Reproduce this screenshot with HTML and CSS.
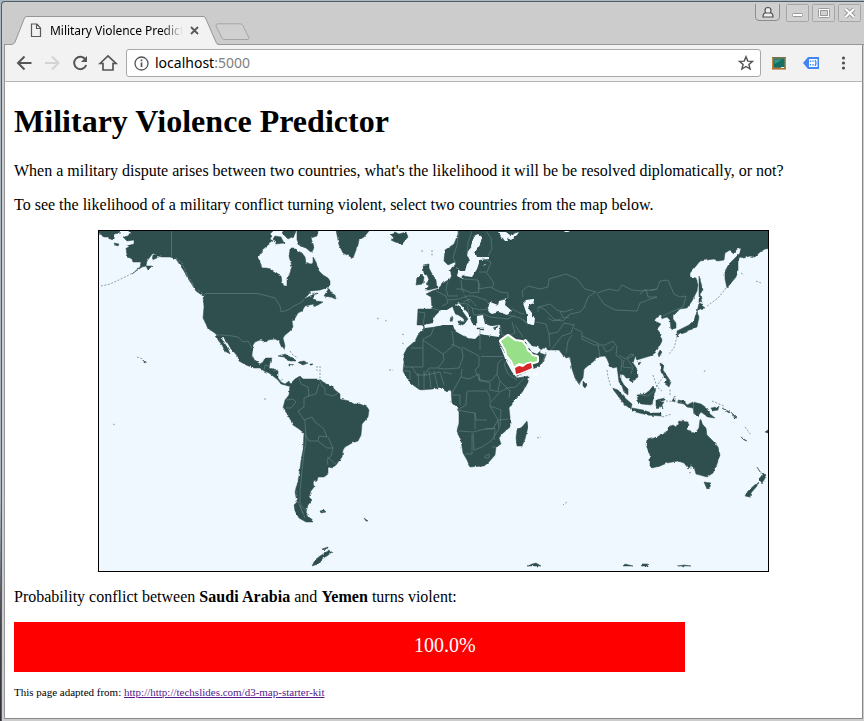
FILE: index.html
```html
<!DOCTYPE html>
<html lang="en">
<head>
<meta charset="utf-8">
<title>Military Violence Predictor</title>
<link rel="stylesheet" href="styles.css">
</head>
<body>
<div class="window">
  <header class="titlebar">
    <div class="tab">
      <svg class="tab-shape" width="208" height="30" viewBox="0 0 208 30"><path d="M0 28.500H1L4 27 13.500 2Q14 .5 16 .5H192Q194 .5 194.500 2L205 27 208 30H0Z" fill="#f2f2f2"/><path d="M0 28.500Q3 28.500 4 26L13.500 2Q14 .5 16 .5H192Q194 .5 194.500 2L205 26Q206 28.500 208 28.500" fill="none" stroke="#979797"/></svg>
      <svg class="page-icon" width="12" height="15" viewBox="0 0 12 15"><path d="M1.500 1H7L10.500 5V13.500H1.500ZM6.500 1V5.500H10.500" fill="none" stroke="#5a5a5a" stroke-width="1.200"/></svg>
      <span class="tab-title">Military Violence Predict</span>
      <svg class="tab-close" width="9" height="9" viewBox="0 0 9 9"><path d="M1 1 8 8M8 1 1 8" stroke="#5a5a5a" stroke-width="1.800"/></svg>
    </div>
    <svg class="new-tab" width="36" height="18" viewBox="0 0 36 18"><path d="M3 .8H25Q27 .8 28 2.500L34 15Q34 16.500 32 16.500H10Q8 16.500 7 15L1 3Q.5 .8 3 .8Z" fill="#d0d0d0" stroke="#a5a5a5"/></svg>
    <svg class="window-buttons" width="109" height="20" viewBox="0 0 109 20">
      <path d="M.5 0V13Q.5 16.500 4 16.500H21Q24.500 16.500 24.500 13V0" fill="#d0d0d0" stroke="#8d8d8d"/>
      <path d="M10 6.500Q10 3.500 13 3.500T16 6.500Q16 8 15 9H16Q18 9.500 18 13H8Q8 9.500 10 9H11Q10 8 10 6.500ZM10.500 9H15.500" fill="#eee" stroke="#505050" stroke-width="1.200"/>
      <g fill="#d0d0d0" stroke="#a6a6a6"><rect x="31.500" y=".5" width="22" height="17" rx="1"/><rect x="57.500" y=".5" width="22" height="17" rx="1"/><rect x="83.500" y=".5" width="22" height="17" rx="1"/></g>
      <rect x="37.500" y="9.500" width="10" height="3" rx="1" fill="#fff" stroke="#999"/>
      <rect x="63.500" y="4.500" width="11" height="9" rx="1" fill="#fff" stroke="#999"/><rect x="65.500" y="6.500" width="7" height="5" fill="#d0d0d0" stroke="#999"/>
      <path d="M90.500 5 99 13M99 5 90.500 13" stroke="#999" stroke-width="4"/><path d="M90.500 5 99 13M99 5 90.500 13" stroke="#fff" stroke-width="2"/>
    </svg>
  </header>
  <nav class="toolbar">
    <svg class="nav-icons" width="112" height="30" viewBox="0 0 112 30" fill="none" stroke-width="2">
      <path d="M17 15H3.500M10 8.500 3.500 15 10 21.500" transform="translate(.5 0)" stroke="#555"/>
      <path d="M31 15H44.500M38 8.500 44.500 15 38 21.500" stroke="#d3d3d3"/>
      <path d="M71.500 11.500A6.200 6.200 0 1 0 72.200 17" stroke="#555"/><path d="M73 8V14H67Z" fill="#555"/>
      <path d="M86 15.500 94 8 102 15.500H99V22H89V15.500Z" stroke="#555" stroke-width="1.700"/>
    </svg>
    <div class="omnibox">
      <svg width="15" height="15" viewBox="0 0 15 15"><circle cx="7.500" cy="7.500" r="6.500" fill="none" stroke="#555" stroke-width="1.300"/><path d="M7.500 6.500V11M7.500 3.500V5.300" stroke="#555" stroke-width="1.700"/></svg>
      <span class="url">localhost<span class="port">:5000</span></span>
      <svg class="star" width="16" height="16" viewBox="0 0 16 16"><path d="M8 1.700 9.800 6.100 14.500 6.400 10.900 9.400 12.100 14 8 11.500 3.900 14 5.100 9.400 1.500 6.400 6.200 6.100Z" fill="none" stroke="#505050" stroke-width="1.400"/></svg>
    </div>
    <svg class="extensions" width="82" height="20" viewBox="0 0 82 20">
      <rect x=".7" y="4.700" width="12.600" height="10.600" fill="#176f63" stroke="#c08a45" stroke-width="1.400"/><path d="M0 4.500H14" stroke="#777351"/><path d="M2 6.500H10L3 11Z" fill="#369888"/><path d="M0 16H14" stroke="#a3561d"/><path d="M9 14.500H12" stroke="#eee"/>
      <path d="M31 10 36 4H47V16H36Z" fill="#4285f4"/><path d="M37 6H45.500V14H37Z" fill="#fff"/><path d="M38.500 7.500V9M38.500 11V12.500M41 7.500V9M41 11V12.500M43 7Q45 10 43 13M34 8.500V11.500" fill="none" stroke="#4285f4" stroke-width="1.300"/>
      <g fill="#505050"><circle cx="71.500" cy="5" r="1.600"/><circle cx="71.500" cy="10" r="1.600"/><circle cx="71.500" cy="15" r="1.600"/></g>
    </svg>
  </nav>
  <main class="page">
    <h1>Military Violence Predictor</h1>
    <p>When a military dispute arises between two countries, what's the likelihood it will be be resolved diplomatically, or not?</p>
    <p>To see the likelihood of a military conflict turning violent, select two countries from the map below.</p>
    <svg class="map" viewBox="99 231 669 340">
      <!-- Gives the simplified outlines an irregular coastline -->
      <filter id="coast" filterUnits="userSpaceOnUse" x="90" y="220" width="690" height="360" color-interpolation-filters="sRGB">
        <feTurbulence type="fractalNoise" baseFrequency=".22" numOctaves="2" seed="4" result="noise"/>
        <feDisplacementMap in="SourceGraphic" in2="noise" scale="2.6" xChannelSelector="R" yChannelSelector="G"/>
      </filter>
      <g filter="url(#coast)">
      <g class="land">
        <!-- North and Central America -->
        <path d="M125 225H273V231L270 234 272 236 270 239 273 241 268 245 262 250 260 254 258 258 260 262 262 268 267 268 272 270 277 273 281 276 282 282 284 286 287 286 287 278 290 273 292 266 290 260 289 256 290 249 296 249 298 251 302 253 305 257 306 262 310 264 313 263 313 257 316 262 317 265 319 271 323 275 328 278 330 281 330 285 326 288 320 290 312 291 308 295 304 299 312 295 317 293 315 297 316 301 323 302 318 305 313 307 314 304 305 306 302 311 298 313 294 320 292 321 293 327 290 331 285 335 283 338 285 346 284 350 281 346 279 341 275 339 268 340 267 342 260 340 255 342 253 345 252 355 255 361 260 364 263 362 265 358 272 358 270 363 269 368 278 370 278 378 281 382 285 384 289 381 291 386 288 386 285 385 281 384 278 380 273 376 269 373 264 371 260 368 254 368 246 365 239 361 238 357 234 352 231 349 227 342 223 337 220 337 224 342 228 349 230 354 225 351 222 345 218 340 216 334 212 331 208 329 206 324 203 318 204 307 203 296 196 291 191 283 187 277 184 271 180 265 176 259 170 257 162 257 157 256 153 253 150 257 147 261 146 266 142 267 136 271 132 274 140 267 141 262 133 262 132 259 128 257 127 255 126 248 130 245 134 244 134 240 127 241 123 237 128 236 130 233Z"/>
        <path d="M90 225H118V231L121 233 115 234 114 238 112 240 108 237 104 237 99 234ZM297 225H318V231L317 236 311 238 314 247 312 253 306 248 300 246 297 240ZM275 236 281 237 284 243 276 244 273 239ZM281 225H296V231L294 236 288 239 284 235ZM335 225H369V231L364 237 359 240 358 245 356 250 353 258 349 256 343 253 339 245ZM324 296 329 288 331 293 335 295 336 299 330 297ZM278 356 285 354 297 361 290 361 283 357ZM298 362 304 361 308 363 303 365 299 363ZM289 364 293 365 289 366ZM310 364 313 364 312 365 310 365ZM114 243 119 244 118 246 115 245ZM146 266 152 266 148 270ZM153 255 158 254 157 258 152 260ZM144 360 146 362 144 363Z"/>
        <!-- South America -->
        <path d="M290 384 295 379 300 376 303 379 318 379 325 383 332 386 335 390 340 394 340 399 349 401 354 404 360 404 367 407 369 410 368 417 362 424 361 435 358 441 352 443 345 447 343 450 342 457 336 465 332 468 328 466 328 474 324 477 318 477 317 481 313 482 314 487 311 491 309 497 312 500 308 505 306 512 309 517 313 522 306 522 299 518 295 511 294 505 297 502 295 492 299 476 301 461 303 450 304 433 299 429 293 425 288 415 283 408 285 400 289 395Z"/>
        <path d="M320 511 324 510 326 512 321 513ZM364 518 368 521 366 521ZM312 566 315 560 320 556 328 551 332 552 327 556 323 558 318 564ZM322 549 328 547 328 548 323 550Z"/>
        <!-- Europe, Africa and Asia -->
        <path d="M458 225H775V248L765 249 760 252 755 257 750 256 744 258 740 257 738 260 738 270 736 277 731 283 727 288 725 279 725 271 729 264 733 260 740 253 741 248 737 249 734 253 730 250 725 253 724 260 718 261 714 259 700 261 696 266 690 273 690 277 696 278 698 285 697 291 692 301 687 308 680 309 673 316 673 319 676 323 676 328 671 330 670 320 667 317 661 319 662 315 656 318 654 321 657 322 661 324 657 329 661 334 662 341 659 347 655 353 650 356 640 359 637 360 635 357 633 363 637 369 638 377 635 379 631 382 630 378 626 378 624 375 621 374 621 380 624 385 628 389 628 395 624 392 622 386 619 382 618 374 617 367 613 368 610 366 607 359 605 356 597 357 594 361 584 369 583 378 579 384 575 378 572 369 570 357 565 358 559 350 548 350 545 348 540 350 540 353 546 355 543 362 538 367 532 369 517 376 517 378 529 376 528 382 525 388 520 395 513 402 509 408 510 417 510 427 502 434 499 438 501 444 496 447 495 455 488 463 484 466 470 467 467 460 463 453 461 441 457 431 459 423 459 412 457 408 452 403 451 390 445 391 442 387 433 389 420 390 413 385 408 380 403 371 404 362 403 356 407 348 415 341 418 335 425 328 422 325 417 325 418 309 432 309 431 297 426 294 432 291 438 289 443 283 450 279 452 275 450 270 456 265 455 262 448 265 444 261 445 250 454 244 458 234Z"/>
        <path d="M423 265 429 264 429 268 431 272 436 280 437 288 429 290 425 290 429 286 426 284 429 280 427 275 424 274ZM417 278 421 274 424 277 423 284 416 285ZM390 234 395 232 399 234 406 232 408 237 402 244 395 242 391 240 394 238ZM527 421 528 427 525 439 522 446 517 446 516 438 517 430 522 427ZM583 381 587 385 585 388 583 386ZM699 276 703 290 700 294 702 303 699 302ZM699 303 705 308 700 309 697 312ZM697 312 699 317 697 327 690 330 686 332 680 334 677 337 677 331 683 328 689 325 694 320ZM660 350 662 352 659 357 658 354ZM660 363 664 365 663 370 667 376 671 382 669 387 664 383 667 380 661 372ZM637 363 641 362 639 365ZM765 240 768 237V242Z"/>
        <!-- South-east Asia and Oceania -->
        <path d="M612 388 618 390 625 398 632 404 631 409 625 405ZM632 408 643 410 652 413 661 413 661 416 647 415 632 411ZM637 395 645 394 650 390 653 386 656 389 654 395 652 405 641 404 638 401ZM656 400 665 398 665 400 659 402 664 402 662 405 663 409 660 406 658 409 656 406ZM672 401 675 396 675 402ZM678 400 684 401 687 405 693 402 701 404 708 409 710 414 715 418 708 417 701 412 698 416 694 413 693 408 687 407 684 404 679 403ZM711 408 717 407 719 405 718 410 712 411ZM722 408 730 412 729 413ZM731 412 737 418 735 418ZM741 437 747 441 744 440ZM647 440 654 438 661 435 667 431 669 427 673 425 676 427 679 421 688 422 689 425 687 429 694 433 697 433 699 428 700 419 703 425 706 428 707 435 713 441 718 447 720 455 717 464 713 473 707 477 696 474 694 467 691 466 688 468 684 463 678 461 667 463 660 466 652 468 650 466 650 455 646 445ZM704 482 711 483 710 487 707 489ZM757 467 761 473 767 475 762 483 759 479 762 475ZM758 482 757 486 751 493 750 497 745 496 748 491ZM528 566 532 564 536 563 541 566ZM623 566 625 564 633 566ZM641 566 643 564 647 564 649 566ZM678 566 684 565 691 566ZM765 432 768 430V433Z"/>
      </g>
      <!-- Inland seas -->
      <path class="sea" d="M478 234 482 237 480 245 475 252 477 257 489 257 489 259 480 260 477 269 472 277 465 276 463 279 457 276 458 271 456 267 460 271 465 271 467 264 470 261 467 254 471 246 474 236ZM498 232 505 241 508 241 507 238 511 240 517 235 519 232 510 235 506 232ZM425 328 424 325 433 323 435 316 440 311 445 311 452 307 459 303 468 313 472 323 476 326 477 316 483 315 485 324 491 326 500 325 499 337 492 336 480 334 475 339 468 338 462 335 455 331 453 325 443 325 433 327ZM487 311 490 302 498 305 499 301 506 299 505 305 512 311 507 315 499 312 492 314ZM523 303 526 300 533 299 534 303 529 305 528 308 532 313 532 317 535 318 534 325 527 324 527 315ZM523 340 526 339 532 346 538 347 541 350 537 354 532 352 527 345ZM499 343 505 353 516 372 517 378 512 372 506 361ZM564 231H570L568 232H565ZM482 266 485 265 484 264ZM308 293 317 291 313 294 319 295 321 300 313 299 315 294Z"/>
      <path class="land" d="M452 305 458 305 463 312 468 319 465 323 463 318 455 313ZM458 321 465 322 463 325 458 323ZM451 316 453 317 452 322 450 321ZM477 328 484 328 484 329 477 329ZM493 328 498 326 496 329ZM452 267 458 269 456 276 451 275ZM470 313 476 315 477 323 473 321ZM462 276 465 275 465 278 462 278Z"/>
      </g>
      <!-- Country borders -->
      <path class="borders" d="M171.500 231V257M205 293.500H257L264 295 275 298 280 306 281 312 288 310 294 306 302 302 304 299M216 335H222L232 336 238 337 243 342 248 341 252 348M264 370 265 365 270 366M273 371 278 370M280 381 283 379M299 378 301 384 308 387 309 396 304 398 304 407 298 411 304 420 312 417 315 422 324 429 327 437 319 436 318 441 309 441 305 434M305 420 306 441 304 452 302 470 300 492 300 504 307 512M286 400 293 399 296 402 291 408 286 408M308 396 316 394 319 384M325 388 325 394 333 396 338 393M318 441 327 448 333 448 331 456 327 460 328 465M319 379 322 386 325 388M328 437 333 448M327 457 336 464"/>
      <path class="borders" d="M419 312 425 313 423 325M431 308 441 311M436 291 446 296 448 303 442 306M448 281 446 289 448 296 458 296M461 280 462 289 471 293 479 292 478 280 463 279M448 300 459 299 467 296 474 296 486 300 489 304M458 303 468 304 472 308 480 310 488 309M463 302 470 299 476 306M467 305 469 313M472 308 474 315 484 314M478 281 480 286 478 289 490 287 500 292 508 293 508 298 502 300M479 272 486 272 494 283 492 288M487 272 491 262 482 258M459 231 457 245 453 258 456 263M472 231 468 243 467 255M486 231 491 238 492 249 488 256M456 289 462 289 464 293M464 295 470 303M512 309 520 313 524 314M508 315 520 318 528 324M484 314 490 317 508 319 515 315M500 325 502 335 508 336 515 333 512 322M515 325 523 337M523 319 528 325M523 297 522 291 528 286 540 289 548 287 549 279 566 274 577 279 585 289 596 292 588 297 584 308 580 312 570 314 563 321 555 320 544 309 538 307V312"/>
      <path class="borders" d="M597 293 609 289 618 291 622 285 632 290 642 291 657 289M657 297 648 300 640 303 637 311 615 310 604 304 597 294M640 294 646 289 648 297 657 297M650 291 657 289 660 281 668 280 674 294 680 297 686 296 683 307 671 312 663 316M536 322 546 324 549 334 550 347M549 334 558 332 564 323 574 325M548 318 553 321 561 319M539 307 550 304 557 310 564 312 573 309M560 311 563 318 569 317M551 350 562 336 571 333 574 324M572 335 568 341 566 353M574 328 582 332 582 339 594 345 605 345 613 341 617 347M582 336 599 344M598 345 600 357M603 346 606 352 611 350 614 346M617 347 616 355 622 360 621 371M619 355 625 359 631 354 634 355 627 359 633 367 631 374M624 360 623 367 632 368M546 352 542 364M480 330V350M481 356.500H503M434 327 431 335 423 339 423 348H411M423 340 443 354 454 345 452 331M423 348V367H411M443 354 444 360 438 368 429 368 424 376M451 344 462 349 463 357 459 368 444 369 438 368M462 347 479 356V366L475 370 480 381M462 369 461 377 452 393M461 377 469 379 479 374 480 381 491 381 497 374 498 363 502 359M478 379 490 383 490 390 500 392 507 388 510 391M497 374 500 381 507 388 516 387 524 378M500 381 498 391M510 358 504 364 508 374 517 380M510 390 509 398M467 391 466 405 457 410 468 412 475 413 476 420H487M468 391H487L490 397 490 406 498 420 508 419M499 393 491 402M459 431 473 432 485 429 493 429 498 420 499 429 491 441 482 447 474 450 473 433M485 429 495 428 494 440M472 434V454L465 454M475 413V429M490 406 501 410 500 427M485 456 489 454 489 458 485 458ZM492 447 496 447M418 373 419 387M424 371 424 389M429 371 431 388M434 371 438 388M404 367H412L417 375 426 375 440 372 444 385M403 371 410 371 410 380M443 372 452 374M452 395H460V405M693.500 402.500V414M641 395 648 396 654 391"/>
      <!-- Island chains -->
      <path class="islands" d="M101 286 110 284 119 280 127 276 136 271M176 258 182 263 186 272 190 282M190 279 194 286M198 290 206 296M137 357 143 359M296 491 298 502 303 513M300 506 305 518M317 366V371M320 366 320 378M290 351 293 355 298 358M377 318 379 319M385 320 388 322M402 343 404 344M402 334 404 335M726 288 718 298 706 307M655 390 660 381 664 376M653 375 657 387 662 391M670 395 670 388M666 401 680 402M662 417 672 414M712 401 724 406M745 427 751 435M741 273 744 275M756 281 761 283M704 372 706 369M607 370 608 377 611 387M678 333 674 348 669 354M422 250V253M432 250 432 257M567 502 563 505M264 399 266 399M537 438 541 437M113 424 115 425M389 370 393 370M689 473 692 472M691 464 691 469"/>
      <!-- Selected countries -->
      <path class="selected saudi" d="M501 341 508 336 515 341 522 342 526 347 527 351 530 353 532 356 537 357 537 361 530 363 523 364 519 363 514 366 512 361 507 355 506 350Z"/>
      <path class="selected yemen" d="M515 368 519 366 523 367 527 364 531 363 532 368 525 371 520 373 516 374Z"/>
      <path d="M533 374.500H538" stroke="#fff" stroke-width="2"/>
    </svg>
    <p>Probability conflict between <b>Saudi Arabia</b> and <b>Yemen</b> turns violent:</p>
    <div class="bar">100.0%</div>
    <p class="credit">This page adapted from: <a href="#">http://http://techslides.com/d3-map-starter-kit</a></p>
  </main>
</div>
</body>
</html>
```
FILE: styles.css
```css
* { box-sizing: border-box; }
body {
  margin: 0;
  height: 721px;
  overflow: hidden;
  padding-top: 1px;
  background: linear-gradient(#a8b8c2 0, #a8b8c2 500px, #454550 620px, #303038);
  font: 16px "Liberation Serif", serif;
  color: #000;
}
.window {
  height: 720px;
  margin-left: 1px;
  border: 1px solid #555b60;
  border-bottom: 0;
  border-right: 0;
  border-radius: 4px 0 0 0;
  background: #ccc;
}
.titlebar {
  display: flex;
  height: 43px;
  align-items: flex-start;
  margin-left: 2px;
  border-bottom: 1px solid #979797;
}
.tab {
  position: relative;
  display: flex;
  align-items: center;
  width: 208px;
  height: 30px;
  margin: 14px 0 0 7px;
  padding: 0 0 1px 19px;
}
.tab-shape { position: absolute; left: 0; top: 0; }
.page-icon, .tab-title, .tab-close { position: relative; }
.tab-title {
  width: 133px;
  margin-left: 8px;
  white-space: nowrap;
  font: 12px/18px "Noto Sans", sans-serif;
  letter-spacing: -.05px;
  -webkit-mask-image: linear-gradient(90deg, #000 112px, transparent 133px);
  mask-image: linear-gradient(90deg, #000 112px, transparent 133px);
}
.tab-close { margin-left: 7px; }
.new-tab { margin: 21px 0 0 -4px; }
.window-buttons { margin: 2px 0 0 auto; }
.toolbar {
  display: flex;
  align-items: center;
  height: 37px;
  margin: 0 1px 0 2px;
  padding-left: 9px;
  border-left: 1px solid #979797;
  border-right: 1px solid #888;
  border-bottom: 1px solid #b6b6b6;
  background: #f2f2f2;
}
.omnibox {
  display: flex;
  align-items: center;
  width: 635px;
  height: 28px;
  border: 1px solid #a8a8a8;
  padding: 0 6px 0 7px;
  border-radius: 3px;
  background: #fff;
}
.url { margin-left: 6px; font: 14px/20px "Noto Sans", sans-serif; }
.port { color: #808080; }
.star { margin-left: auto; }
.extensions { margin-left: 11px; }
.page {
  height: 637px;
  margin: 0 1px 0 2px;
  padding: 0 9px;
  overflow: hidden;
  border-left: 1px solid #979797;
  border-right: 1px solid #888;
  border-bottom: 1px solid #888;
  background: #fff;
}
h1 { margin: 21.4px 0; font-size: 32px; line-height: 37px; letter-spacing: .02px; }
p { margin: 16px 0; line-height: 18px; }
b { letter-spacing: .06px; }
.map {
  display: block;
  width: 671px;
  height: 342px;
  margin-left: 84px;
  border: 1px solid #000;
  background: #f0f8ff;
}
.land { fill: #2f4f4f; stroke: #2f4f4f; stroke-width: .5; }
.sea { fill: #f0f8ff; }
.borders { fill: none; stroke: #668585; stroke-width: .6; }
.islands { fill: none; stroke: #708989; stroke-width: .8; stroke-dasharray: 2 1.5; }
.selected { stroke: #fff; stroke-width: 4; stroke-linejoin: round; paint-order: stroke; }
.saudi { fill: #98df8a; }
.yemen { fill: #d62728; stroke-width: 3; }
.bar {
  width: 671px;
  height: 50px;
  padding-left: 400px;
  background: #f00;
  color: #fff;
  font-size: 20px;
  line-height: 46px;
}
.credit { margin: 14px 0; font-size: 11px; line-height: 13px; }
.credit a { color: #551a8b; }
```
